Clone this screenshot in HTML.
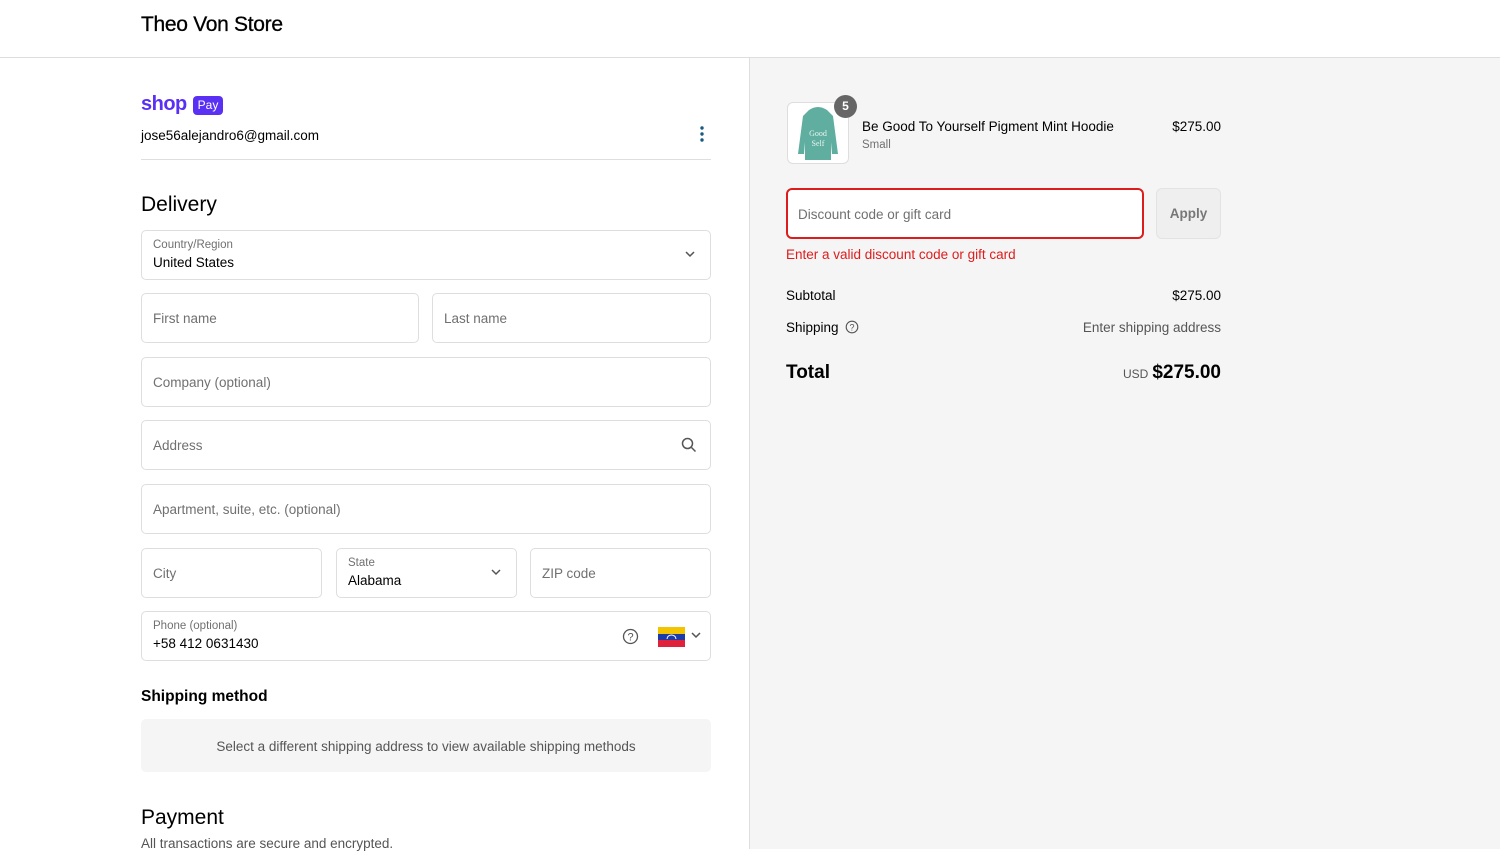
<!DOCTYPE html>
<html><head><meta charset="utf-8"><style>
*{box-sizing:border-box;margin:0;padding:0}
body{width:1500px;height:849px;overflow:hidden;font-family:"Liberation Sans",sans-serif;color:#000;background:#fff;position:relative;font-size:13.5px}
.hdr{height:58px;border-bottom:1px solid #dedede;position:relative}
.hdr h1{position:absolute;left:141px;top:13px;font-size:21px;font-weight:normal;letter-spacing:-.3px;-webkit-text-stroke:.3px #000}
.right{position:absolute;left:749px;top:58px;right:0;bottom:0;background:#f5f5f5;border-left:1px solid #dedede}
.a{position:absolute}
.r{position:absolute;right:279px;text-align:right}
.f{position:absolute;border:1px solid #dedede;border-radius:5px;background:#fff;height:50px}
.ph{position:absolute;left:11px;top:17px;font-size:13.5px;color:#707070}
.lb{position:absolute;left:11px;top:8px;font-size:11.5px;color:#707070}
.vl{position:absolute;left:11px;top:24px;font-size:13.5px;color:#000}
.chev{position:absolute;top:19px;width:12px;height:8px}
</style></head><body>
<div class="hdr"><h1>Theo Von Store</h1></div>

<div class="a" style="left:141px;top:93px;font-size:20px;font-weight:bold;color:#5a31f4;letter-spacing:-.5px">shop</div>
<div class="a" style="left:193px;top:96px;width:30px;height:19px;background:#5a31f4;border-radius:4px;color:#fff;font-size:12px;text-align:center;line-height:19px">Pay</div>
<div class="a" style="left:141px;top:128px">jose56alejandro6@gmail.com</div>
<svg class="a" style="left:699px;top:125px" width="6" height="18"><circle cx="3" cy="3" r="1.7" fill="#1a5a80"/><circle cx="3" cy="9" r="1.7" fill="#1a5a80"/><circle cx="3" cy="15" r="1.7" fill="#1a5a80"/></svg>
<div class="a" style="left:141px;top:159px;width:570px;height:1px;background:#dedede"></div>

<div class="a" style="left:141px;top:193px;font-size:21px">Delivery</div>
<div class="f" style="left:141px;top:230px;width:570px"><span class="lb">Country/Region</span><span class="vl">United States</span>
<svg class="chev" style="right:14px" viewBox="0 0 12 8"><path d="M2 2l4 4 4-4" fill="none" stroke="#555" stroke-width="1.5"/></svg></div>
<div class="f" style="left:141px;top:293px;width:278px"><span class="ph">First name</span></div>
<div class="f" style="left:432px;top:293px;width:279px"><span class="ph">Last name</span></div>
<div class="f" style="left:141px;top:357px;width:570px"><span class="ph">Company (optional)</span></div>
<div class="f" style="left:141px;top:420px;width:570px"><span class="ph">Address</span>
<svg class="a" style="right:13px;top:16px" width="16" height="16" viewBox="0 0 16 16"><circle cx="6.5" cy="6.5" r="5" fill="none" stroke="#555" stroke-width="1.5"/><path d="M10.5 10.5l4 4" stroke="#555" stroke-width="1.5"/></svg></div>
<div class="f" style="left:141px;top:484px;width:570px"><span class="ph">Apartment, suite, etc. (optional)</span></div>
<div class="f" style="left:141px;top:548px;width:181px"><span class="ph">City</span></div>
<div class="f" style="left:336px;top:548px;width:181px"><span class="lb">State</span><span class="vl">Alabama</span>
<svg class="chev" style="right:14px" viewBox="0 0 12 8"><path d="M2 2l4 4 4-4" fill="none" stroke="#555" stroke-width="1.5"/></svg></div>
<div class="f" style="left:530px;top:548px;width:181px"><span class="ph">ZIP code</span></div>
<div class="f" style="left:141px;top:611px;width:570px"><span class="lb">Phone (optional)</span><span class="vl">+58 412 0631430</span>
<svg class="a" style="left:480px;top:16px" width="17" height="17" viewBox="0 0 17 17"><circle cx="8.5" cy="8.5" r="7" fill="none" stroke="#555" stroke-width="1.3"/><text x="8.5" y="12.5" font-size="11" text-anchor="middle" fill="#555" font-family="Liberation Sans">?</text></svg>
<svg class="a" style="left:516px;top:15px" width="27" height="20"><rect width="27" height="7" fill="#f4c300"/><rect y="7" width="27" height="6" fill="#1a3ba8"/><rect y="13" width="27" height="7" fill="#e0213c"/><path d="M9 12a4.5 4 0 0 1 9 0" fill="none" stroke="#fff" stroke-width="1"/></svg>
<svg class="chev" style="left:548px" viewBox="0 0 12 8"><path d="M2 2l4 4 4-4" fill="none" stroke="#555" stroke-width="1.5"/></svg></div>

<div class="a" style="left:141px;top:688px;font-size:15.5px;font-weight:bold">Shipping method</div>
<div class="a" style="left:141px;top:719px;width:570px;height:53px;background:#f5f5f5;border-radius:5px;text-align:center;line-height:55px;font-size:13.5px;color:#555">Select a different shipping address to view available shipping methods</div>
<div class="a" style="left:141px;top:806px;font-size:21px">Payment</div>
<div class="a" style="left:141px;top:836px;color:#555">All transactions are secure and encrypted.</div>

<div class="right"></div>
<div class="a" style="left:787px;top:102px;width:62px;height:62px;border:1px solid #dedede;border-radius:6px;background:#fff"></div>
<svg class="a" style="left:795px;top:106px" width="46" height="56" viewBox="0 0 46 56"><path d="M14 4q9-6 18 0l6 6 5 38h-6l-1-12 0 18H10l0-18-1 12H3L8 10z" fill="#5fae9f"/><text x="23" y="30" font-size="8" fill="#e9f5f1" text-anchor="middle" font-family="Liberation Serif">Good</text><text x="23" y="40" font-size="8" fill="#e9f5f1" text-anchor="middle" font-family="Liberation Serif">Self</text></svg>
<div class="a" style="left:834px;top:95px;width:23px;height:23px;border-radius:50%;background:#666;color:#fff;font-size:12px;text-align:center;line-height:23px;font-weight:bold">5</div>
<div class="a" style="left:862px;top:119px">Be Good To Yourself Pigment Mint Hoodie</div>
<div class="a" style="left:862px;top:139px;font-size:11.5px;color:#707070">Small</div>
<div class="r" style="top:119px">$275.00</div>
<div class="a" style="left:786px;top:188px;width:358px;height:51px;border:2px solid #dd1d1d;border-radius:6px;background:#fff"><span class="a" style="left:10px;top:17px;color:#707070">Discount code or gift card</span></div>
<div class="a" style="left:1156px;top:188px;width:65px;height:51px;border:1px solid #e3e3e3;border-radius:6px;background:#efefef;text-align:center;line-height:50px;font-weight:bold;color:#777">Apply</div>
<div class="a" style="left:786px;top:247px;color:#dd1d1d">Enter a valid discount code or gift card</div>
<div class="a" style="left:786px;top:288px">Subtotal</div>
<div class="r" style="top:288px">$275.00</div>
<div class="a" style="left:786px;top:320px">Shipping</div>
<svg class="a" style="left:845px;top:320px" width="14" height="14" viewBox="0 0 14 14"><circle cx="7" cy="7" r="5.8" fill="none" stroke="#555" stroke-width="1.1"/><text x="7" y="10.5" font-size="9" text-anchor="middle" fill="#555" font-family="Liberation Sans">?</text></svg>
<div class="r" style="top:320px;color:#555">Enter shipping address</div>
<div class="a" style="left:786px;top:362px;font-size:19px;font-weight:bold">Total</div>
<div class="r" style="top:362px;font-size:19px;font-weight:bold"><span style="font-size:12px;font-weight:normal;color:#555;margin-right:4px">USD</span>$275.00</div>
</body></html>
